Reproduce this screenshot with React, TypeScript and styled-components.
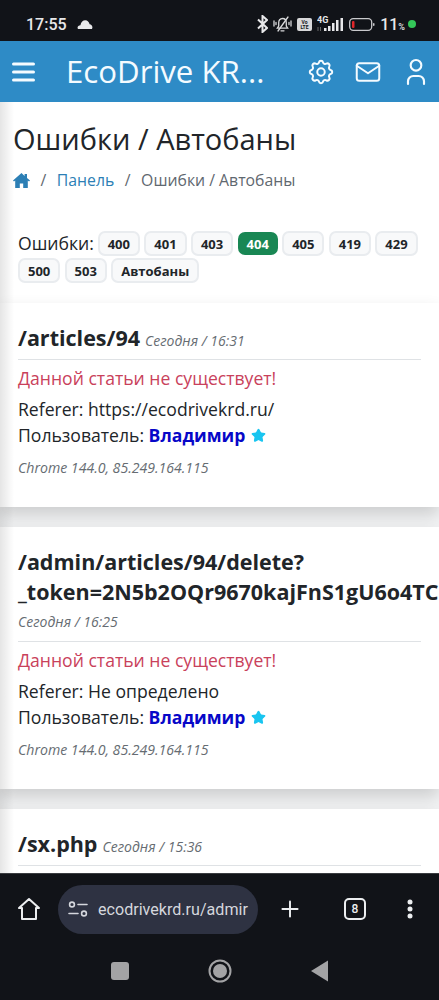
import styled, { createGlobalStyle } from 'styled-components';
import { Star, Plus } from 'lucide-react';
import { TbSettings, TbMail, TbUser } from 'react-icons/tb';

const GlobalStyle = createGlobalStyle`
  html, body {
    margin: 0;
    padding: 0;
    background: #fff;
  }
  * {
    box-sizing: border-box;
  }
`;

const Screen = styled.div`
  width: 439px;
  height: 1000px;
  display: flex;
  flex-direction: column;
  overflow: hidden;
  font-family: 'Open Sans', sans-serif;
  color: #212529;
`;

const StatusBar = styled.div`
  height: 41px;
  flex-shrink: 0;
  background: #111318;
  color: #e8e8ea;
  display: flex;
  align-items: center;
  justify-content: space-between;
  padding: 7px 23px 0 26px;
  font-family: Roboto, sans-serif;
`;

const StatusGroup = styled.div`
  display: flex;
  align-items: center;
  gap: 5px;
`;

const Clock = styled.span`
  font-size: 16px;
  font-weight: 500;
  margin-right: 5px;
`;

const BatteryText = styled.span`
  font-size: 16px;
  font-weight: 500;
  small {
    font-size: 9px;
  }
`;

const GreenDot = styled.span`
  width: 8px;
  height: 8px;
  margin-left: -2px;
  border-radius: 50%;
  background: #34c759;
`;

const TopBar = styled.header`
  height: 61px;
  flex-shrink: 0;
  background: #2e8bc6;
  color: #f4fbff;
  display: flex;
  align-items: center;
  padding: 0 7px 0 12px;
`;

const Brand = styled.div`
  font-size: 31.2px;
  margin-left: 31px;
  flex: 1;
  white-space: nowrap;
  line-height: 1;
`;

const TopIcons = styled.div`
  display: flex;
  align-items: center;
  gap: 17px;
`;

const Main = styled.main`
  flex: 1;
  min-height: 0;
  position: relative;
  overflow: hidden;
  background: #f3f4f5;
  &::after {
    content: '';
    position: absolute;
    inset: 0 auto 0 0;
    width: 14px;
    background: linear-gradient(to right, rgba(0, 0, 0, 0.1), rgba(0, 0, 0, 0));
    pointer-events: none;
  }
`;

const PageHead = styled.div`
  background: #fff;
  height: 103px;
  padding: 17px 13px 0;
  box-shadow: 0 1px 2px rgba(0, 0, 0, 0.08);
`;

const Title = styled.h1`
  margin: 0;
  font-size: 29px;
  font-weight: 400;
  line-height: 39px;
`;

const Crumbs = styled.nav`
  display: flex;
  align-items: center;
  margin-top: 11px;
  font-size: 15.8px;
  line-height: 22px;
  color: #5f6870;
`;

const CrumbLink = styled.span`
  color: #2c7fb5;
`;

const CrumbSep = styled.span`
  margin: 0 10.5px;
`;

const Filters = styled.section`
  background: #fff;
  height: 98px;
  padding: 26px 18px 0;
  display: flex;
  flex-wrap: wrap;
  align-content: flex-start;
  align-items: center;
  gap: 2px 4.3px;
`;

const FiltersLabel = styled.span`
  font-size: 17.6px;
  margin-right: -0.5px;
  line-height: 25px;
`;

const Chip = styled.span<{ $active?: boolean }>`
  height: ${(p) => (p.$active ? '23px' : '25px')};
  padding: 0 ${(p) => (p.$active ? '9px' : '8px')};
  display: inline-flex;
  align-items: center;
  border-radius: 7px;
  font-size: 13px;
  font-weight: 700;
  color: ${(p) => (p.$active ? '#fff' : '#212529')};
  background: ${(p) => (p.$active ? '#198754' : '#f8f9fa')};
  border: ${(p) => (p.$active ? 'none' : '2px solid #e9ecef')};
`;

const Card = styled.article`
  background: #fff;
  padding: 18px 18px 0;
  margin-bottom: 20px;
  box-shadow: 0 8px 16px rgba(0, 0, 0, 0.16);
`;

const LastCard = styled(Card)`
  padding-bottom: 40px;
`;

const CardHead = styled.div`
  padding-bottom: 5px;
  border-bottom: 1px solid #dfe2e5;
  white-space: nowrap;
`;

const LongCardHead = styled(CardHead)`
  padding-top: 2px;
  padding-bottom: 9px;
`;

const Path = styled.span`
  font-size: 21.5px;
  font-weight: 700;
  line-height: 33px;
`;

const BlockPath = styled(Path)`
  display: block;
  line-height: 30px;
`;

const When = styled.em`
  font-size: 14px;
  color: #666c72;
  margin-left: 5px;
`;

const BlockWhen = styled(When)`
  display: block;
  margin: 5px 0 0;
  line-height: 20px;
`;

const ErrorText = styled.div`
  color: #c9415b;
  font-size: 17.6px;
  line-height: 26px;
  margin: 5px 0;
`;

const Line = styled.div`
  font-size: 17.6px;
  line-height: 26px;
  display: flex;
  align-items: center;
  white-space: pre;
`;

const UserName = styled.b`
  color: #0707c8;
  margin-right: 6px;
`;

const Agent = styled.div`
  font-style: italic;
  font-size: 14.1px;
  color: #666c72;
  margin-top: 10px;
  line-height: 20px;
  padding-bottom: 29px;
`;

const BrowserBar = styled.div`
  height: 73px;
  flex-shrink: 0;
  background: #111318;
  border-top: 1px solid #3a3c40;
  display: flex;
  align-items: center;
  padding: 0 26px 2px 17px;
  color: #eceef0;
`;

const UrlPill = styled.div`
  width: 200px;
  height: 49px;
  margin-left: 17px;
  border-radius: 25px;
  background: #2e3242;
  display: flex;
  align-items: center;
  padding-left: 10px;
  gap: 10px;
  overflow: hidden;
  font-family: Roboto, sans-serif;
  font-size: 16.1px;
  color: #d5d7dd;
  white-space: nowrap;
`;

const BarActions = styled.div`
  flex: 1;
  display: flex;
  align-items: center;
  justify-content: space-between;
  padding-left: 19px;
`;

const TabCount = styled.span`
  width: 22px;
  height: 22px;
  border: 2px solid #eceef0;
  border-radius: 5px;
  display: flex;
  align-items: center;
  justify-content: center;
  font-family: Roboto, sans-serif;
  font-size: 12px;
  font-weight: 500;
`;

const NavBar = styled.div`
  height: 54px;
  flex-shrink: 0;
  background: #111318;
  display: flex;
  align-items: center;
  gap: 79px;
  padding: 0 0 4px 111px;
`;

function Menu() {
  return (
    <svg width="23" height="20" viewBox="0 0 23 20" fill="none" stroke="#f4fbff" strokeWidth="3" strokeLinecap="round">
      <path d="M1.5 2h20M1.5 10h20M1.5 18h20" />
    </svg>
  );
}

function BluetoothMark() {
  return (
    <svg width="11" height="18" viewBox="0 0 11 18" fill="none" stroke="#e8e8ea" strokeWidth="2">
      <path d="M1 4.5 10 13l-4.5 4V1L10 5 1 13.5" />
    </svg>
  );
}

function SilentBell() {
  return (
    <svg width="19" height="17" viewBox="0 0 19 17" fill="none" stroke="#d8d8da" strokeWidth="1.3" strokeLinecap="round">
      <path d="M9.5 2.5c2.6 0 3.8 2 3.8 4.2V10l1.4 2.2H4.3L5.7 10V6.7c0-2.2 1.2-4.2 3.8-4.200z" />
      <path d="M8 14.8h3M15 1 5 15M1 5v5M3 6.5v2M18 5v5M16 6.5v2" />
    </svg>
  );
}

function Volte() {
  return (
    <svg width="15" height="13" viewBox="0 0 15 13">
      <rect width="15" height="13" rx="2" fill="#d8d8da" />
      <text x="7.5" y="5.5" fontSize="5" fontWeight="700" textAnchor="middle" fontFamily="Roboto" fill="#111318">Vo</text>
      <text x="7.5" y="11" fontSize="5" fontWeight="700" textAnchor="middle" fontFamily="Roboto" fill="#111318">LTE</text>
    </svg>
  );
}

function Signal() {
  return (
    <svg width="27" height="18" viewBox="0 0 27 18" fill="#e8e8ea">
      <text x="0" y="8" fontSize="9" fontWeight="700" fontFamily="Roboto">4G</text>
      <rect x="0.5" y="12" width="1" height="4" fill="#666" />
      <rect x="3" y="12" width="1" height="4" fill="#666" />
      <rect x="7" y="13" width="2.5" height="3" />
      <rect x="11" y="11" width="2.5" height="5" />
      <rect x="15" y="8" width="2.5" height="8" />
      <rect x="19" y="5" width="2.5" height="11" />
      <rect x="23.5" y="3" width="2.5" height="13" />
    </svg>
  );
}

function Battery() {
  return (
    <svg width="26" height="13" viewBox="0 0 26 13" fill="none">
      <rect x="0.7" y="0.7" width="22" height="11.6" rx="3.5" stroke="#c9c9cc" strokeWidth="1.3" />
      <rect x="3" y="3" width="2.5" height="7" rx="1" fill="#e0262a" />
      <rect x="24" y="5" width="1.5" height="3" rx="0.7" fill="#c9c9cc" />
    </svg>
  );
}

function Cloud() {
  return (
    <svg width="16" height="9" viewBox="0 0 16 9" fill="#e8e8ea">
      <path d="M1 9c-1.2-2 .2-3.8 2.400-3.800C4 2 6 .3 8.200.3c2.300 0 4 1.700 4.400 4 2 0 3.600 2.400 2.400 4.700z" />
    </svg>
  );
}

function HomeSolid() {
  return (
    <svg width="17" height="15" viewBox="0 0 17 15" fill="#2c7fb5">
      <path d="M8.5 0 0 7.4l1 1.1 1.2-1V15h4.600v-4.400h3.400V15h4.600V7.500l1.200 1 1-1.100L14 5V1h-2.400v1.900z" />
    </svg>
  );
}

function HomeOutline() {
  return (
    <svg width="24" height="24" viewBox="0 0 24 24" fill="none" stroke="#eceef0" strokeWidth="2" strokeLinejoin="round">
      <path d="M12 2 2 11h3v11h14V11h3z" />
    </svg>
  );
}

function SiteControls() {
  return (
    <svg width="20" height="16" viewBox="0 0 20 16" fill="none" stroke="#d5d7dd" strokeWidth="1.6" strokeLinecap="round">
      <circle cx="4" cy="3.5" r="2.4" />
      <path d="M10 3.5h9M1 12.5h9" />
      <circle cx="16" cy="12.5" r="2.4" />
    </svg>
  );
}

function Dots() {
  return (
    <svg width="6" height="20" viewBox="0 0 6 20" fill="#eceef0">
      <circle cx="3" cy="3" r="2.5" />
      <circle cx="3" cy="10" r="2.5" />
      <circle cx="3" cy="17" r="2.5" />
    </svg>
  );
}

function NavSquare() {
  return (
    <svg width="18" height="18" viewBox="0 0 18 18" fill="#a3a3a5">
      <rect width="18" height="18" rx="3" />
    </svg>
  );
}

function NavCircle() {
  return (
    <svg width="24" height="24" viewBox="0 0 24 24">
      <circle cx="12" cy="12" r="10.5" fill="none" stroke="#a3a3a5" strokeWidth="2" />
      <circle cx="12" cy="12" r="7" fill="#a3a3a5" />
    </svg>
  );
}

function NavBack() {
  return (
    <svg width="17" height="22" viewBox="0 0 17 22" fill="#a3a3a5">
      <path d="M17 0.5v21L0 11z" />
    </svg>
  );
}

const codes = ['400', '401', '403', '404', '405', '419', '429', '500', '503', 'Автобаны'];

function UserLine() {
  return (
    <Line>
      {'Пользователь: '}
      <UserName>Владимир</UserName>
      <Star size={15} fill="#19c5f0" color="#19c5f0" />
    </Line>
  );
}

export default function App() {
  return (
    <Screen>
      <GlobalStyle />
      <StatusBar>
        <StatusGroup>
          <Clock>17:55</Clock>
          <Cloud />
        </StatusGroup>
        <StatusGroup>
          <BluetoothMark />
          <SilentBell />
          <Volte />
          <Signal />
          <Battery />
          <BatteryText>
            11<small>%</small>
          </BatteryText>
          <GreenDot />
        </StatusGroup>
      </StatusBar>
      <TopBar>
        <Menu />
        <Brand>EcoDrive KR...</Brand>
        <TopIcons>
          <TbSettings size={30} strokeWidth={1.6} />
          <TbMail size={30} strokeWidth={1.6} />
          <TbUser size={32} strokeWidth={1.6} />
        </TopIcons>
      </TopBar>
      <Main>
        <PageHead>
          <Title>Ошибки / Автобаны</Title>
          <Crumbs>
            <HomeSolid />
            <CrumbSep>/</CrumbSep>
            <CrumbLink>Панель</CrumbLink>
            <CrumbSep>/</CrumbSep>
            Ошибки / Автобаны
          </Crumbs>
        </PageHead>
        <Filters>
          <FiltersLabel>Ошибки:</FiltersLabel>
          {codes.map((code) => (
            <Chip key={code} $active={code === '404'}>
              {code}
            </Chip>
          ))}
        </Filters>
        <Card>
          <CardHead>
            <Path>/articles/94</Path>
            <When>Сегодня / 16:31</When>
          </CardHead>
          <ErrorText>Данной статьи не существует!</ErrorText>
          <Line>Referer: https://ecodrivekrd.ru/</Line>
          <UserLine />
          <Agent>Chrome 144.0, 85.249.164.115</Agent>
        </Card>
        <Card>
          <LongCardHead>
            <BlockPath>/admin/articles/94/delete?</BlockPath>
            <BlockPath>_token=2N5b2OQr9670kajFnS1gU6o4TC</BlockPath>
            <BlockWhen>Сегодня / 16:25</BlockWhen>
          </LongCardHead>
          <ErrorText>Данной статьи не существует!</ErrorText>
          <Line>Referer: Не определено</Line>
          <UserLine />
          <Agent>Chrome 144.0, 85.249.164.115</Agent>
        </Card>
        <LastCard>
          <CardHead>
            <Path>/sx.php</Path>
            <When>Сегодня / 15:36</When>
          </CardHead>
        </LastCard>
      </Main>
      <BrowserBar>
        <HomeOutline />
        <UrlPill>
          <SiteControls />
          ecodrivekrd.ru/admir
        </UrlPill>
        <BarActions>
          <Plus size={26} strokeWidth={1.8} />
          <TabCount>8</TabCount>
          <Dots />
        </BarActions>
      </BrowserBar>
      <NavBar>
        <NavSquare />
        <NavCircle />
        <NavBack />
      </NavBar>
    </Screen>
  );
}
